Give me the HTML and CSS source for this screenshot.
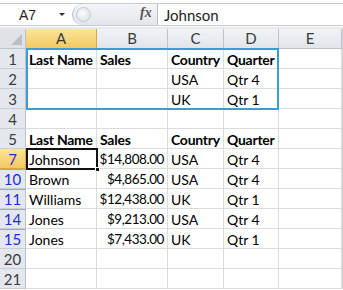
FILE: index.html
```html
<!DOCTYPE html>
<html>
<head>
<meta charset="utf-8">
<link rel="stylesheet" href="styles.css">
</head>
<body>
<div class="app">
  <div class="fbar">
    <div class="namebox"><span class="ref">A7</span><span class="caret"></span></div>
    <div class="mid">
      <div class="knob"></div>
      <span class="fx">fx</span>
    </div>
    <div class="formula">Johnson</div>
  </div>
  <div class="sheet">
    <div class="grid">
      <div class="corner"><span class="tri"></span></div>
      <div class="ch sel">A</div><div class="ch">B</div><div class="ch">C</div><div class="ch">D</div><div class="ch">E</div>

      <div class="rh">1</div><div class="c b">Last Name</div><div class="c b">Sales</div><div class="c b">Country</div><div class="c b">Quarter</div><div class="c"></div>
      <div class="rh">2</div><div class="c"></div><div class="c"></div><div class="c">USA</div><div class="c">Qtr 4</div><div class="c"></div>
      <div class="rh">3</div><div class="c"></div><div class="c"></div><div class="c">UK</div><div class="c">Qtr 1</div><div class="c"></div>
      <div class="rh">4</div><div class="c"></div><div class="c"></div><div class="c"></div><div class="c"></div><div class="c"></div>
      <div class="rh">5</div><div class="c b">Last Name</div><div class="c b">Sales</div><div class="c b">Country</div><div class="c b">Quarter</div><div class="c"></div>
      <div class="rh f active">7</div><div class="c">Johnson</div><div class="c r">$14,808.00</div><div class="c">USA</div><div class="c">Qtr 4</div><div class="c"></div>
      <div class="rh f hid">10</div><div class="c">Brown</div><div class="c r">$4,865.00</div><div class="c">USA</div><div class="c">Qtr 4</div><div class="c"></div>
      <div class="rh f hid">11</div><div class="c">Williams</div><div class="c r">$12,438.00</div><div class="c">UK</div><div class="c">Qtr 1</div><div class="c"></div>
      <div class="rh f hid">14</div><div class="c">Jones</div><div class="c r">$9,213.00</div><div class="c">USA</div><div class="c">Qtr 4</div><div class="c"></div>
      <div class="rh f hid">15</div><div class="c">Jones</div><div class="c r">$7,433.00</div><div class="c">UK</div><div class="c">Qtr 1</div><div class="c"></div>
      <div class="rh">20</div><div class="c"></div><div class="c"></div><div class="c"></div><div class="c"></div><div class="c"></div>
      <div class="rh">21</div><div class="c"></div><div class="c"></div><div class="c"></div><div class="c"></div><div class="c"></div>
    </div>
    <div class="criteria"></div>
    <div class="cursor"><span class="handle"></span></div>
  </div>
</div>
</body>
</html>
```

FILE: styles.css
```css
* { box-sizing: border-box; }
html, body { margin: 0; padding: 0; background: #fff; }
body { width: 343px; height: 290px; overflow: hidden; font-family: Lato, "Open Sans", sans-serif; }

.fbar {
  height: 23px;
  display: flex;
  border-top: 1px solid #c6cbd1;
  border-bottom: 1px solid #c6cbd1;
  margin-top: 3px;
  background: #fff;
}
.namebox {
  width: 72px;
  display: flex;
  align-items: center;
  color: #222;
  padding-left: 19px;
  position: relative;
}
.ref { font-family: "Liberation Sans", Arial, sans-serif; font-size: 14px; }
.caret {
  position: absolute;
  left: 59px;
  top: 9px;
  width: 0; height: 0;
  border-left: 3px solid transparent;
  border-right: 3px solid transparent;
  border-top: 3px solid #333;
}
.mid {
  width: 85px;
  background: linear-gradient(#f3f5f8, #e2e6eb);
  border-left: 1px solid #b8bec6;
  border-radius: 11px 0 0 11px;
  position: relative;
}
.knob {
  position: absolute;
  left: 3px;
  top: 3px;
  width: 15px; height: 15px;
  border-radius: 50%;
  background: radial-gradient(circle at 40% 40%, #fbfcfd, #d6dbe1);
  border: 1px solid #c2c8cf;
}
.fx {
  position: absolute;
  left: 67px;
  top: 1px;
  font-family: "Liberation Serif", serif;
  font-style: italic;
  font-weight: bold;
  font-size: 14px;
  color: #555;
}
.formula {
  flex: 1;
  border-left: 1px solid #b8bec6;
  padding-left: 6px;
  font-size: 15px;
  color: #222;
  display: flex;
  align-items: center;
}

.sheet {
  position: relative;
  margin-top: 1px;
  border-top: 2px solid #e6e9ed;
}
.grid {
  display: grid;
  grid-template-columns: 26px 71px 71px 56px 55px 63px;
  grid-auto-rows: 20px;
  width: 343px;
  border-right: 1px solid #d4d4d4;
}
.corner {
  background: #dfe3e8;
  border-right: 1px solid #bdc3ca;
  border-bottom: 1px solid #bdc3ca;
  position: relative;
}
.tri {
  position: absolute;
  right: 3px; bottom: 3px;
  width: 0; height: 0;
  border-left: 11px solid transparent;
  border-bottom: 11px solid #b8bfc7;
}
.ch {
  background: linear-gradient(#f1f3f6, #e1e5ea);
  border-right: 1px solid #bcc3cb;
  border-bottom: 1px solid #bcc3cb;
  text-align: center;
  font-size: 15px;
  line-height: 19px;
  color: #3b3b3b;
}
.ch.sel {
  background: linear-gradient(#fbe49a, #f2c961);
  border-right-color: #d9a73e;
  border-bottom-color: #d9a73e;
}
.rh {
  background: #e4e8ee;
  border-right: 1px solid #bcc3cb;
  border-bottom: 1px solid #c9ced5;
  text-align: center;
  font-size: 15px;
  line-height: 20px;
  color: #3b3b3b;
}
.rh.f { color: #1d2bd8; }
.rh.hid { border-top: 1px solid #9ea7b3; line-height: 18px; }
.rh.active {
  background: linear-gradient(#fbe49a, #f2c961);
  border-right-color: #d9a73e;
  border-bottom-color: #d9a73e;
}
.c {
  border-right: 1px solid #dadcdd;
  border-bottom: 1px solid #dadcdd;
  font-size: 14px;
  line-height: 21px;
  padding-left: 3px;
  color: #000;
  white-space: nowrap;
  overflow: hidden;
}
.c.b { font-weight: bold; letter-spacing: -0.25px; }
.c.r { text-align: right; padding-right: 3px; padding-left: 0; font-size: 13.5px; letter-spacing: -0.45px; }

.criteria {
  position: absolute;
  left: 26px;
  top: 19px;
  width: 253px;
  height: 62px;
  border: 2px solid #3a9fd0;
  pointer-events: none;
}
.cursor {
  position: absolute;
  left: 26px;
  top: 119px;
  width: 72px;
  height: 22px;
  border: 2px solid #111;
}
.handle {
  position: absolute;
  right: -4px;
  bottom: -4px;
  width: 5px; height: 5px;
  background: #111;
  border: 1px solid #fff;
}
```
